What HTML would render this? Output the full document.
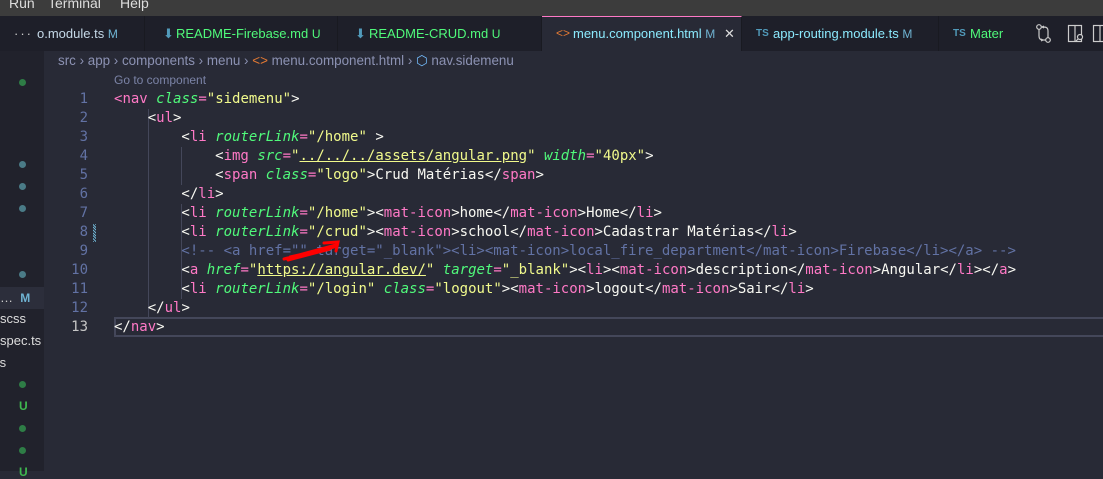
<!DOCTYPE html>
<html><head><meta charset="utf-8"><style>
*{margin:0;padding:0;box-sizing:border-box}
body{width:1103px;height:471px;overflow:hidden;background:#282a36;font-family:"Liberation Sans","DejaVu Sans",sans-serif;position:relative}
.menubar{position:absolute;left:0;top:0;width:1103px;height:16px;background:#3c3c3c;color:#ddd;font-size:14px;line-height:10px}
.menubar span{position:absolute;top:-2px}
.tabs{position:absolute;left:0;top:16px;width:1103px;height:35px;background:#1e1f29}
.tab{position:absolute;top:0;height:35px;border-right:1px solid #191a21;overflow:hidden}
.tabs span.x{position:absolute;top:0;line-height:35px;font-size:13px;white-space:nowrap}
.side{position:absolute;left:0;top:51px;width:44px;height:420px;background:#21222c}
.abs{position:absolute}
.dot{position:absolute;left:19px;width:7px;height:7px;border-radius:50%}
.code{position:absolute;left:114px;font-family:"DejaVu Sans Mono",monospace;font-size:14px;line-height:19px;color:#f8f8f2;white-space:pre}
.ln{position:absolute;left:60px;width:28px;text-align:right;font-family:"DejaVu Sans Mono",monospace;font-size:14px;line-height:19px;color:#6272a4}
.t{color:#ff79c6}.a{color:#50fa7b;font-style:italic}.s{color:#f1fa8c}.c{color:#6272a4}.u{text-decoration:underline;text-decoration-color:#f1fa8c}
.g{position:absolute;width:1px;background:#44475a}
</style></head><body>
<div class="menubar"><span style="left:9px">Run</span><span style="left:48px">Terminal</span><span style="left:120px">Help</span></div>
<div class="tabs">
 <div class="tab" style="left:0;width:145px"></div>
 <div class="tab" style="left:145px;width:193px"></div>
 <div class="tab" style="left:338px;width:204px"></div>
 <div class="tab" style="left:542px;width:200px;background:#282a36;border-top:1px solid #ff79c6"></div>
 <div class="tab" style="left:742px;width:197px"></div>
 <span class="x" style="left:14px;color:#ccc;letter-spacing:2px">···</span>
 <span class="x" style="left:37px;color:#c5d9e8">o.module.ts <span style="color:#6fb3d2;font-size:12px">M</span></span>
 <span class="x" style="left:163px;color:#519aba">⬇</span>
 <span class="x" style="left:176px;color:#50fa7b">README-Firebase.md <span style="font-size:12px">U</span></span>
 <span class="x" style="left:355px;color:#519aba">⬇</span>
 <span class="x" style="left:369px;color:#50fa7b">README-CRUD.md <span style="font-size:12px">U</span></span>
 <span class="x" style="left:556px;color:#e37933;font-size:12px">&lt;&gt;</span>
 <span class="x" style="left:573px;color:#8be9fd">menu.component.html <span style="font-size:12px;color:#6fb3d2">M</span></span>
 <span class="x" style="left:724px;color:#ddd">✕</span>
 <span class="x" style="left:756px;color:#519aba;font-size:10px;font-weight:bold">TS</span>
 <span class="x" style="left:773px;color:#8be9fd">app-routing.module.ts <span style="font-size:12px;color:#6fb3d2">M</span></span>
 <span class="x" style="left:953px;color:#519aba;font-size:10px;font-weight:bold">TS</span>
 <span class="x" style="left:970px;color:#50fa7b">Mater</span>
 <div class="abs" style="left:1003px;top:0;width:100px;height:35px;background:#1e1f29"></div>
 <svg class="abs" style="left:1035px;top:8px" width="68" height="20" viewBox="0 0 68 20" fill="none" stroke="#ccc" stroke-width="1.2">
  <circle cx="4" cy="3" r="2.3"/><circle cx="13" cy="16" r="2.3"/><path d="M4 5.5V12q0 4 4 4h2.5M6 15l2 1-2 1"/><path d="M13 13.5V7q0-4-4-4H7M9 2 7 3l2 1"/>
  <rect x="33.5" y="1.5" width="13" height="16"/><path d="M40 1.5v16"/><circle cx="45" cy="13" r="2.5" fill="#1e1f29"/><path d="M43 15l-2 2"/>
  <rect x="58.5" y="1.5" width="13" height="16"/><path d="M65 1.5v16"/>
 </svg>
</div>
<div class="abs" style="left:58px;top:53px;font-size:13.4px;color:#8c92b3;white-space:nowrap">src › app › components › menu › <span style="color:#e37933">&lt;&gt;</span> menu.component.html › <span style="color:#75beff">⬡</span> nav.sidemenu</div>
<div class="side">
 <div class="dot" style="top:28px;background:#2e7d46"></div>
 <div class="dot" style="top:110px;background:#4a7b87"></div>
 <div class="dot" style="top:132px;background:#4a7b87"></div>
 <div class="dot" style="top:154px;background:#4a7b87"></div>
 <div class="dot" style="top:220px;background:#4a7b87"></div>
 <div class="abs" style="left:0;top:236px;width:44px;height:22px;background:#2c2e3b;color:#ccc;font-size:13px;line-height:22px">…&nbsp;&nbsp;<span style="color:#6fb3d2;font-weight:bold;font-size:12px">M</span></div>
 <div class="abs" style="left:0;top:260px;color:#ddd;font-size:13px">scss</div>
 <div class="abs" style="left:0;top:282px;color:#ddd;font-size:13px">spec.ts</div>
 <div class="abs" style="left:-4px;top:304px;color:#ddd;font-size:13px">ts</div>
 <div class="dot" style="top:330px;background:#2e7d46"></div>
 <div class="abs" style="left:19px;top:348px;color:#3fb950;font-size:12px;font-weight:bold">U</div>
 <div class="dot" style="top:374px;background:#2e7d46"></div>
 <div class="dot" style="top:396px;background:#2e7d46"></div>
 <div class="abs" style="left:19px;top:414px;color:#3fb950;font-size:12px;font-weight:bold">U</div>
</div>
<div class="abs" style="left:114px;top:73px;font-size:12px;color:#7b83a6">Go to component</div>
<div class="abs" style="left:114px;top:317px;width:989px;height:20px;border:2px solid #44475a;border-right:none"></div>
<div class="g" style="left:148px;top:109px;height:209px"></div>
<div class="g" style="left:181px;top:147px;height:38px"></div>
<div class="g" style="left:181px;top:204px;height:95px"></div>
<div class="abs" style="left:93px;top:224px;width:3px;height:18px;background:repeating-linear-gradient(45deg,#6fb3d2 0 1px,transparent 1px 2px)"></div>
<div class="ln" style="top:90px">1<br>2<br>3<br>4<br>5<br>6<br>7<br>8<br>9<br>10<br>11<br>12<br><span style="color:#c6c6c6">13</span></div>
<div class="code" style="top:90px"><span class="t">&lt;</span><span class="t">nav</span> <span class="a">class</span><span class="t">=</span><span class="s">"sidemenu"</span>&gt;
    &lt;<span class="t">ul</span>&gt;
        &lt;<span class="t">li</span> <span class="a">routerLink</span><span class="t">=</span><span class="s">"/home"</span> &gt;
            &lt;<span class="t">img</span> <span class="a">src</span><span class="t">=</span><span class="s">"<span class="u">../../../assets/angular.png</span>"</span> <span class="a">width</span><span class="t">=</span><span class="s">"40px"</span>&gt;
            &lt;<span class="t">span</span> <span class="a">class</span><span class="t">=</span><span class="s">"logo"</span>&gt;Crud Matérias&lt;/<span class="t">span</span>&gt;
        &lt;/<span class="t">li</span>&gt;
        &lt;<span class="t">li</span> <span class="a">routerLink</span><span class="t">=</span><span class="s">"/home"</span>&gt;&lt;<span class="t">mat-icon</span>&gt;home&lt;/<span class="t">mat-icon</span>&gt;Home&lt;/<span class="t">li</span>&gt;
        &lt;<span class="t">li</span> <span class="a">routerLink</span><span class="t">=</span><span class="s">"/crud"</span>&gt;&lt;<span class="t">mat-icon</span>&gt;school&lt;/<span class="t">mat-icon</span>&gt;Cadastrar Matérias&lt;/<span class="t">li</span>&gt;
<span class="c">        &lt;!-- &lt;a href="" target="_blank"&gt;&lt;li&gt;&lt;mat-icon&gt;local_fire_department&lt;/mat-icon&gt;Firebase&lt;/li&gt;&lt;/a&gt; --&gt;</span>
        &lt;<span class="t">a</span> <span class="a">href</span><span class="t">=</span><span class="s">"<span class="u">https://angular.dev/</span>"</span> <span class="a">target</span><span class="t">=</span><span class="s">"_blank"</span>&gt;&lt;<span class="t">li</span>&gt;&lt;<span class="t">mat-icon</span>&gt;description&lt;/<span class="t">mat-icon</span>&gt;Angular&lt;/<span class="t">li</span>&gt;&lt;/<span class="t">a</span>&gt;
        &lt;<span class="t">li</span> <span class="a">routerLink</span><span class="t">=</span><span class="s">"/login"</span> <span class="a">class</span><span class="t">=</span><span class="s">"logout"</span>&gt;&lt;<span class="t">mat-icon</span>&gt;logout&lt;/<span class="t">mat-icon</span>&gt;Sair&lt;/<span class="t">li</span>&gt;
    &lt;/<span class="t">ul</span>&gt;
&lt;/<span class="t">nav</span>&gt;</div>
<svg class="abs" style="left:280px;top:237px" width="65" height="28" viewBox="0 0 65 28" fill="none" stroke="#ff0000" stroke-width="3" stroke-linecap="round">
 <path d="M4 22 L56 8 M10 20 L54 10 M8 23 L50 12"/><path d="M44 6 L58 5 L56 14"/>
</svg>
</body></html>
